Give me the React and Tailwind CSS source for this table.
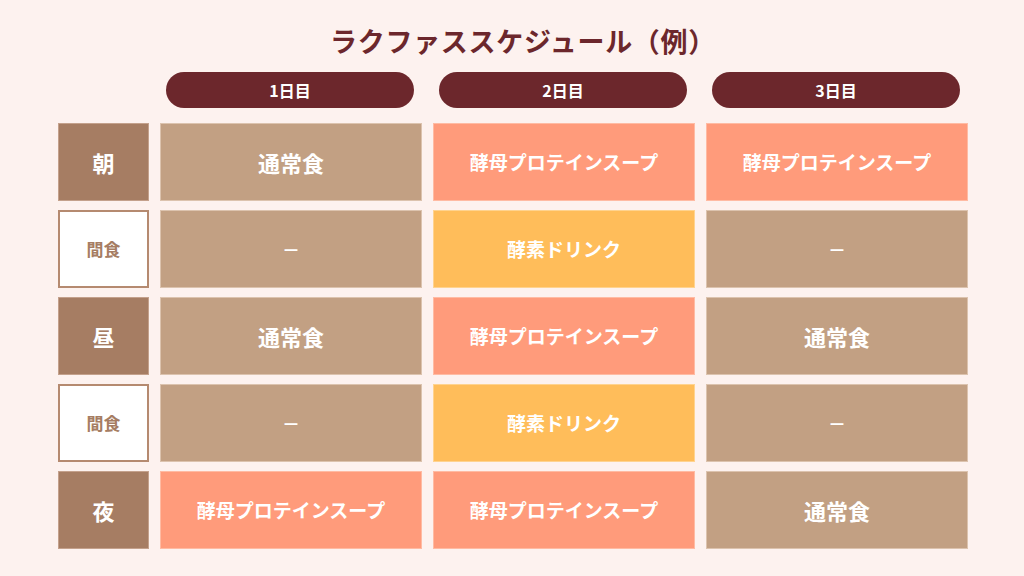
import React from "react";

const font = { fontFamily: '"Noto Sans CJK JP", "Noto Sans", sans-serif' };

const T = "t", S = "s", Y = "y";
const rows = [
  { label: "朝", snack: false, cells: [[T, "通常食"], [S, "酵母プロテインスープ"], [S, "酵母プロテインスープ"]] },
  { label: "間食", snack: true, cells: [[T, "－"], [Y, "酵素ドリンク"], [T, "－"]] },
  { label: "昼", snack: false, cells: [[T, "通常食"], [S, "酵母プロテインスープ"], [T, "通常食"]] },
  { label: "間食", snack: true, cells: [[T, "－"], [Y, "酵素ドリンク"], [T, "－"]] },
  { label: "夜", snack: false, cells: [[S, "酵母プロテインスープ"], [S, "酵母プロテインスープ"], [T, "通常食"]] },
];

function Cell({ kind, text }) {
  const bg =
    kind === T
      ? "bg-[#c2a083] border-[#dcc3ae]"
      : kind === S
      ? "bg-[#ff9b7b] border-[#ffbba3]"
      : "bg-[#ffbd5a] border-[#ffd38f]";
  const size = text === "通常食" ? "text-[22px]" : text === "－" ? "text-[18px]" : "text-[19px]";
  return (
    <div className={`flex items-center justify-center border ${bg}`}>
      <span className={`font-bold text-white ${size}`}>{text}</span>
    </div>
  );
}

export default function App() {
  return (
    <div className="w-[1024px] h-[576px] bg-[#fdf2ef] overflow-hidden" style={font}>
      <div className="h-[72px] flex items-center justify-center pt-[12px] pb-[2px] pl-[22px]">
        <h1 className="text-[27px] font-bold text-[#6c272c] tracking-[0.7px]">ラクファススケジュール（例）</h1>
      </div>
      <div className="ml-[58px] w-[910px] grid grid-cols-[91px_262px_262px_262px] gap-x-[11px] gap-y-[9px]">
        <div />
        {["1日目", "2日目", "3日目"].map((d) => (
          <div key={d} className="pl-[6px] pr-[8px] mb-[6px]">
            <div className="h-[36px] rounded-full bg-[#6c272c] flex items-center justify-center">
              <span className="text-white font-bold text-[16px]">{d}</span>
            </div>
          </div>
        ))}
        {rows.map((r, i) => (
          <React.Fragment key={i}>
            {r.snack ? (
              <div className="h-[78px] bg-white border-2 border-[#b58a70] flex items-center justify-center">
                <span className="text-[#a67d63] font-bold text-[17px]">{r.label}</span>
              </div>
            ) : (
              <div className="h-[78px] bg-[#a67d63] border border-[#c4a18c] flex items-center justify-center">
                <span className="text-white font-bold text-[22px]">{r.label}</span>
              </div>
            )}
            {r.cells.map(([k, t], j) => (
              <Cell key={j} kind={k} text={t} />
            ))}
          </React.Fragment>
        ))}
      </div>
    </div>
  );
}
